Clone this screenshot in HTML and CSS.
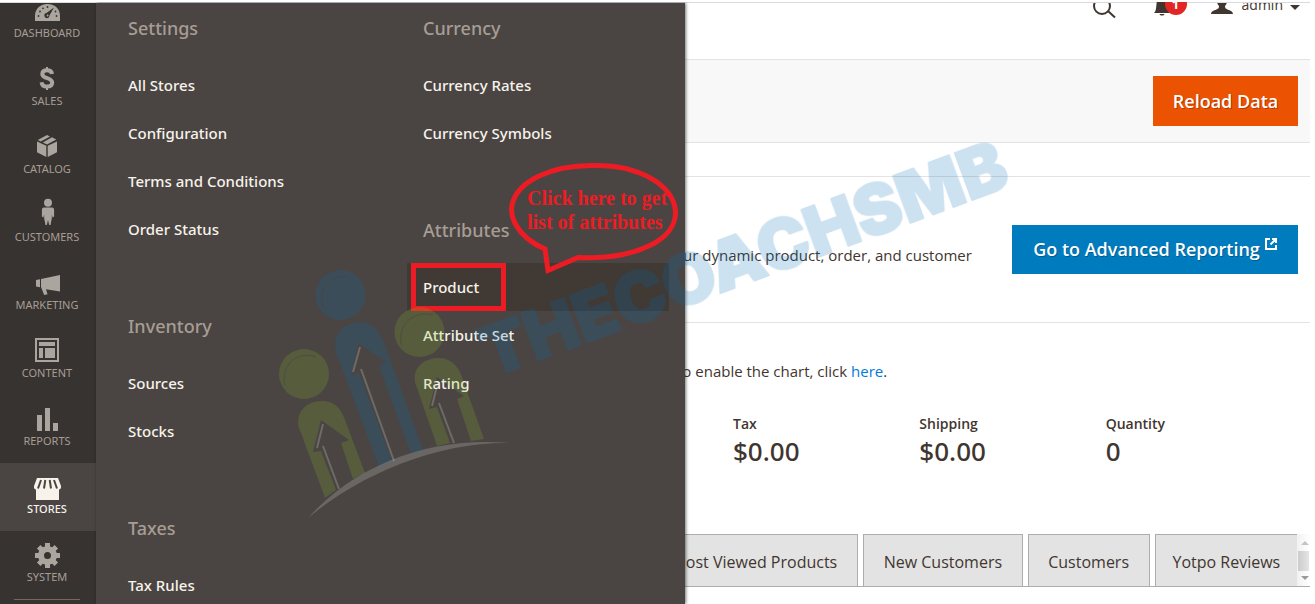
FILE: index.html
```html
<!DOCTYPE html>
<html lang="en">
<head>
<meta charset="utf-8">
<title>Dashboard / Admin</title>
<link rel="stylesheet" href="styles.css">
</head>
<body>
<div class="app">
  <nav class="sidebar" aria-label="Main menu">
    <a class="nav-item nav-first" href="#">
      <svg class="nav-icon" viewBox="0 0 28 28"><path d="M2 26v-5C2 13 8 9 14.500 9S27 13 27 21v5z"/><path class="cut" d="M21 12.500l-4.500 8a2.600 2.600 0 1 1-3-2.500z"/><g class="cut"><circle cx="5.500" cy="21" r=".9"/><circle cx="7" cy="16.500" r=".9"/><circle cx="10" cy="13.300" r=".9"/><circle cx="14.500" cy="12" r=".9"/><circle cx="22.500" cy="16.500" r=".9"/><circle cx="23.500" cy="21" r=".9"/></g><circle cx="14.600" cy="20.500" r=".9"/></svg>
      <span>DASHBOARD</span></a>
    <a class="nav-item" href="#">
      <svg class="nav-icon" viewBox="0 0 28 28"><path class="thick" d="M19 11c-.3-2.600-2.200-3.700-5-3.700-3 0-4.700 1.400-4.700 3.600 0 5.400 9.900 2.900 9.900 8.700 0 2.500-2 4-5.200 4-3.100 0-5.100-1.500-5.400-4.400"/><path d="M13 4h2v3h-2zM13 24h2v3h-2z"/></svg>
      <span>SALES</span></a>
    <a class="nav-item" href="#">
      <svg class="nav-icon" viewBox="0 0 28 28"><path d="M4 10.500l9.300 4.300V26L4 21.300zM24 10.500l-9.300 4.300V26l9.300-4.700zM14 4l3 1.400-9.300 5L4.800 9zM19 6.300l4.300 2.200-9.300 5-4.200-2z"/></svg>
      <span>CATALOG</span></a>
    <a class="nav-item" href="#">
      <svg class="nav-icon" viewBox="0 0 28 28"><circle cx="15" cy="3.800" r="4"/><path d="M11 8.500h8c1.500 0 2.100 1 2.100 2.500v6.500l-1.500 1-.8-3v4L17.500 26h-1.300L15 21l-1.200 5h-1.300l-1.300-6.500v-4l-.8 3-1.500-1V11c0-1.500.6-2.500 2.100-2.500z"/></svg>
      <span>CUSTOMERS</span></a>
    <a class="nav-item" href="#">
      <svg class="nav-icon" viewBox="0 0 28 28"><path d="M27 8v16.500l-14-2.300 1.500 5-3.300.8L8 20V12zM3 13l4-.8v8L3 19.500z"/><path class="cut" d="M7 12h.9v8.500H7z"/></svg>
      <span>MARKETING</span></a>
    <a class="nav-item" href="#">
      <svg class="nav-icon" viewBox="0 0 28 28"><path d="M2 3h24v24H2zm2 2v20h20V5z" fill-rule="evenodd"/><path d="M6 7h16v4H6zM6 13h4v10H6zM12 13h10v10H12z"/></svg>
      <span>CONTENT</span></a>
    <a class="nav-item" href="#">
      <svg class="nav-icon" viewBox="0 0 28 28"><path d="M4 12h5v16H4zM12 5h5v23h-5zM20 20h5v8h-5z"/></svg>
      <span>REPORTS</span></a>
    <a class="nav-item nav-active" href="#">
      <svg class="nav-icon" viewBox="0 0 28 28"><path d="M4 7h21l3 8c.3 2-.6 3.500-2 3.500V29H3V18.500C1.600 18.500.7 17 1 15z"/><path class="slit" d="M8 9l-3 8.500M12.300 9L11 17.500M16.700 9l1.300 8.500M21 9l3 8.500"/></svg>
      <span>STORES</span></a>
    <a class="nav-item" href="#">
      <svg class="nav-icon" viewBox="0 0 28 28"><circle class="gear" cx="14.500" cy="16.500" r="6.500"/><path class="teeth" d="M14.500 4v4M14.500 25v4M2 16.500h4M23 16.500h4M5.700 7.700l3 3M20.300 22.300l3 3M23.300 7.700l-3 3M8.700 22.300l-3 3"/></svg>
      <span>SYSTEM</span></a>
    <hr class="nav-rule">
  </nav>

  <section class="flyout" aria-label="Stores">
    <div class="menu-column">
      <div class="menu-group"><h2>Settings</h2><a href="#">All Stores</a><a href="#">Configuration</a><a href="#">Terms and Conditions</a><a href="#">Order Status</a></div>
      <div class="menu-group"><h2>Inventory</h2><a href="#">Sources</a><a href="#">Stocks</a></div>
      <div class="menu-group"><h2>Taxes</h2><a href="#">Tax Rules</a></div>
    </div>
    <div class="menu-column">
      <div class="menu-group"><h2>Currency</h2><a href="#">Currency Rates</a><a href="#">Currency Symbols</a></div>
      <div class="menu-group"><h2>Attributes</h2><a class="current" href="#">Product</a><a href="#">Attribute Set</a><a href="#">Rating</a></div>
    </div>
  </section>

  <main class="page">
    <header class="header">
      <button class="tool search" aria-label="Search"><svg width="26" height="28" viewBox="0 0 26 28"><circle cx="11" cy="15" r="8"/><path d="M17 20l7 6.500"/></svg></button>
      <button class="tool bell" aria-label="Notifications"><svg width="36" height="28" viewBox="0 0 36 28"><path d="M1 22c2-2 2-4 2.500-9C4 8 6 6 9 6s5 2 5.500 7 .5 7 2.500 9zM6.500 23h5c-.5 2-4.500 2-5 0z"/></svg><span class="count">1</span></button>
      <button class="account"><svg width="22" height="28" viewBox="0 0 22 28"><path d="M11 2c4 0 6 3 5.500 7-.3 3-1.500 5-2.500 6 0 2 .5 2.500 2.500 3.500 3 1 5.500 2 5.500 4.500H0c0-2.500 2.500-3.500 5.500-4.500C7.500 17.500 8 17 8 15c-1-1-2.200-3-2.500-6C5 5 7 2 11 2z"/></svg><span>admin</span><i class="caret"></i></button>
    </header>
    <div class="actions"><button class="btn btn-reload">Reload Data</button></div>
    <section class="reporting">
      <p>our dynamic product, order, and customer</p>
      <a class="btn btn-report" href="#">Go to Advanced Reporting<svg width="12" height="12" viewBox="0 0 12 12"><path d="M5 1H1v10h10V7M7 1h4v4M11 1L5.500 6.500"/></svg></a>
    </section>
    <p class="chart-note">to enable the chart, click <a href="#">here</a>.</p>
    <dl class="totals">
      <div><dt>Tax</dt><dd>$0.00</dd></div>
      <div><dt>Shipping</dt><dd>$0.00</dd></div>
      <div><dt>Quantity</dt><dd>0</dd></div>
    </dl>
    <div class="tabs">
      <button class="tab tab-viewed">Most Viewed Products</button>
      <button class="tab tab-new">New Customers</button>
      <button class="tab tab-customers">Customers</button>
      <button class="tab tab-yotpo">Yotpo Reviews</button>
      <div class="scroller"><i class="up"></i><i class="thumb"></i><i class="down"></i></div>
    </div>
  </main>

  <svg class="notes" width="1315" height="604" viewBox="0 0 1315 604">
    <rect x="413.500" y="265.500" width="90" height="43"/>
    <path d="M545 249C515 236 510 215 512 205C517 181 552 165 594 165.500C640 165 673 185 675.500 211C677 240 635 260 578 257.500L548 270.500Z"/>
  </svg>
  <p class="callout">Click here to get<br>list of attributes</p>

  <svg class="watermark" width="1315" height="604" viewBox="0 0 1315 604" aria-hidden="true">
    <g class="wm-blue">
      <circle cx="340.500" cy="295" r="25"/>
      <path d="M379 467L337 355C330 336 344 322 359 322C372 322 380 331 384 343L423 450L411 454L379 366L386 362L358 343L351 376L359 373L392 461Z"/>
      <text class="wm-text" transform="translate(491 378) rotate(-20.300)">THECOACHSMB</text>
    </g>
    <g class="wm-green">
      <circle cx="304" cy="374" r="25"/><circle cx="419.500" cy="332" r="25"/>
      <path d="M325 498L301 433C292 414 306 401 322 401C334 401 341 408 345 420L365 473L353 479L341 443L349 440L321 420L313 452L321 451L336 490Z"/>
      <path d="M437 446L417 388C409 370 423 358 438 358C450 358 458 365 462 377L484 439L471 441L457 399L464 396L437 377L429 409L437 407L450 443Z"/>
    </g>
    <path class="wm-shine" d="M325 310C315 293 328 275 348 276M285 386C280 367 295 350 316 357M402 346C396 330 410 309 433 315"/>
    <path class="wm-line" d="M360 347L353 372M361 369L394 461M323 424L317 448M323 446L339 489M438 382L432 406M439 403L454 443"/>
    <path class="wm-arc" d="M308 518C358 462 434 436 510 443C439 442 363 472 308 518Z"/>
  </svg>
</div>
</body>
</html>
```
FILE: styles.css
```css
* { box-sizing: border-box; }
body { margin: 0; background: #fff; color: #41362f; font: 15px/20px "Open Sans", "Noto Sans", sans-serif; overflow: hidden; }
h2, p, dl, dd { margin: 0; }
a { text-decoration: none; }
button { border: 0; margin: 0; padding: 0; background: none; font: inherit; color: inherit; }
.app { position: relative; display: flex; margin-top: 2px; height: calc(100vh - 2px); padding-right: 5px; overflow: hidden; }
.app::before { content: ""; position: absolute; left: 0; right: 5px; top: 0; height: 1px; background: #d9d9de; }

.sidebar { flex: none; width: 96px; margin-top: 1px; padding-right: 2px; background: #373330; }
.nav-item { display: flex; flex-direction: column; justify-content: flex-end; align-items: center; gap: 2px; height: 68px; margin-right: -2px; padding: 0 2px 14px 0; color: #a79d95; font-family: "Noto Sans", "Open Sans", sans-serif; font-size: 11px; line-height: 16px; }
.nav-first { height: 52px; overflow: hidden; }
.nav-icon { flex: none; width: 28px; height: 28px; fill: #aaa69f; overflow: visible; }
.nav-active { background: #4a4542; color: #f7f3eb; font-weight: 500; }
.nav-active .nav-icon { fill: #f7f3eb; }
.cut { fill: #373330; }
.thick { fill: none; stroke: #aaa69f; stroke-width: 4; }
.slit { fill: none; stroke: #4a4542; stroke-width: 2; }
.gear { fill: none; stroke: #aaa69f; stroke-width: 6; }
.teeth { fill: none; stroke: #aaa69f; stroke-width: 5; }
.nav-rule { margin: 0 14px; border: 0; height: 1px; background: #736963; }

.flyout { position: relative; z-index: 1; flex: none; display: flex; gap: 33px; width: 589px; margin: 1px -16px 0 0; padding: 13px 16px 0; background: #4a4542; box-shadow: 1px 0 3px #0008; font-family: "Noto Sans", "Open Sans", sans-serif; }
.menu-column { flex: 1; display: flex; flex-direction: column; gap: 61px; }
.menu-group h2 { margin: 0 16px 21px; color: #a79d95; font-size: 18px; line-height: 24px; font-weight: 500; }
.menu-group a { display: block; padding: 0 16px; color: #f7f3eb; font-weight: 500; line-height: 48px; }
.menu-group .current { background: #403934; }

.page { flex: 1; min-width: 0; display: flex; flex-direction: column; }
.header { flex: none; display: flex; justify-content: flex-end; align-items: flex-start; height: 58px; padding: 1px 10px 0 0; overflow: hidden; border-bottom: 1px solid #e3e3e3; }
.header button { display: flex; align-items: center; height: 28px; margin-top: -12px; }
.header svg { fill: #41362f; }
.header .search { margin-right: 36px; }
.header .search svg { fill: none; stroke: #41362f; stroke-width: 2; }
.header .bell { position: relative; margin-right: 22px; }
.count { position: absolute; left: 12px; top: 2px; width: 22px; height: 22px; border-radius: 50%; background: #e22626; color: #fff; font-size: 13px; font-weight: 700; line-height: 22px; }
.header .account { font-size: 14px; }
.account span { margin: 0 7px 0 9px; }
.caret { border: 5px solid transparent; border-top-color: #41362f; border-bottom: 0; margin-top: 4px; }
.actions { flex: none; display: flex; justify-content: flex-end; height: 83px; padding: 16px 12px; background: #f8f8f8; border-bottom: 1px solid #e3e3e3; }
.btn { display: flex; justify-content: center; color: #fff; font-size: 18px; font-weight: 600; white-space: nowrap; text-shadow: 1px 1px 0 #0004; }
.btn-reload { align-items: center; width: 145px; height: 50px; background: #eb5202; }
.reporting { flex: none; display: flex; align-items: center; justify-content: space-between; height: 147px; margin-top: 33px; padding: 0 12px 0 5px; border: solid #e3e3e3; border-width: 1px 0; white-space: nowrap; }
.reporting p { padding-top: 10px; }
.btn-report { width: 286px; height: 49px; line-height: 49px; background: #007bbd; gap: 5px; }
.btn-report svg { margin-top: 13px; fill: none; stroke: #fff; stroke-width: 2; }
.chart-note { margin-top: 38px; padding-left: 8px; }
.chart-note a { color: #007bdb; }
.totals { display: grid; grid-template-columns: repeat(3, 1fr); margin-top: 32px; padding: 0 18px 0 64px; }
.totals dt { font-size: 14px; font-weight: 600; line-height: 22px; }
.totals dd { font-family: "Noto Sans", "Open Sans", sans-serif; font-size: 26px; font-weight: 500; line-height: 32px; }
.tabs { display: flex; gap: 5px; margin-top: 67px; height: 53px; border-bottom: 1px solid #adadad; }
.tab { border: 1px solid #adadad; border-bottom: 0; background: #e3e3e3; padding-top: 3px; font-size: 16px; white-space: nowrap; }
.tab-viewed { flex: 1 1 189px; text-align: right; padding-right: 20px; }
.tab-new { flex: 1 1 159px; }
.tab-customers { flex: 1 1 122px; }
.tab-yotpo { flex: 1 1 142px; border-right: 0; }
.scroller { flex: none; display: flex; flex-direction: column; justify-content: space-between; align-items: flex-end; width: 13px; margin-left: -5px; padding: 7px 1px 6px 0; background: linear-gradient(90deg, #f1f1f1, #fff); }
.up, .down { border: 4px solid transparent; }
.up { border-top: 0; border-bottom-color: #c4c4c4; }
.down { border-bottom: 0; border-top-color: #999; }
.thumb { width: 11px; height: 20px; background: linear-gradient(90deg, #ccc, #e4e4e4); }

.notes, .watermark { position: absolute; z-index: 2; left: 0; top: -2px; pointer-events: none; }
.notes { fill: none; stroke: #ed1c24; stroke-width: 5; }
.callout { position: absolute; z-index: 2; left: 527px; top: 184px; width: 147px; overflow: hidden; white-space: nowrap; color: #ed1c24; font: bold 20px/24px "Liberation Serif", serif; }
.watermark { z-index: 3; }
.wm-blue { fill: #006eb9; opacity: .2; }
.wm-green { fill: #87b928; opacity: .2; }
.wm-text { font: 900 69px "Inter", sans-serif; stroke: #006eb9; stroke-width: 2; stroke-linejoin: round; }
.wm-shine { fill: none; stroke: #4a4542; stroke-width: 1; opacity: .6; }
.wm-line { fill: none; stroke: #fff; stroke-width: 2; opacity: .2; }
.wm-arc { fill: #fff; opacity: .18; }
```
